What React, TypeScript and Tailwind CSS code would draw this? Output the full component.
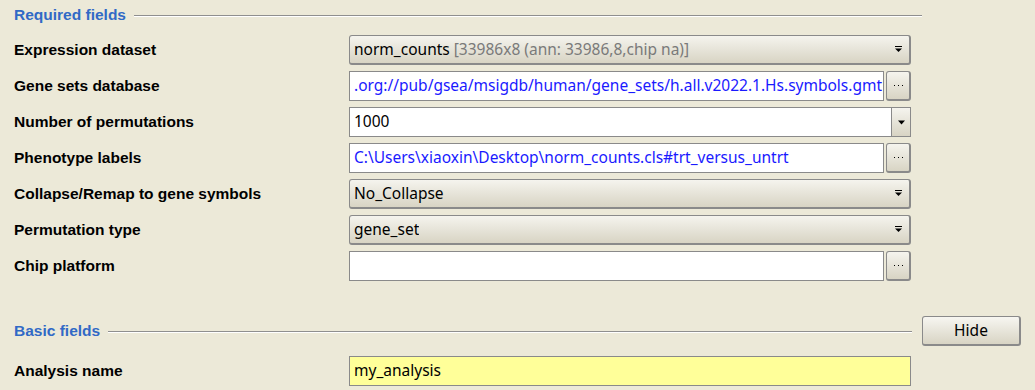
import React from "react";

const labelCls =
  "w-[335px] shrink-0 text-[15.5px] font-bold text-black font-['Liberation_Sans',sans-serif]";
const fieldFont = "font-['Noto_Sans',sans-serif] text-[15.5px]";

const DropArrow = () => (
  <svg width="9" height="7" viewBox="0 0 9 7" className="shrink-0">
    <rect x="1" y="0" width="7" height="1" fill="#000" />
    <path d="M1 2.5 H8 L4.5 6 Z" fill="#000" />
  </svg>
);

const Dropdown = ({ children }: { children: React.ReactNode }) => (
  <div
    className={`w-[562px] h-[30px] flex items-center justify-between pl-[4px] pr-[6px] rounded-[3px] border border-[#8a8a8a] border-b-[2px] border-r-[2px] bg-gradient-to-b from-[#f5f4ee] to-[#d8d4c4] text-black ${fieldFont}`}
  >
    <span className="whitespace-nowrap overflow-hidden">{children}</span>
    <DropArrow />
  </div>
);

const DotsButton = () => (
  <div className="w-[25px] h-[30px] ml-[2px] flex items-center justify-center rounded-[3px] border border-[#8a8a8a] border-b-[2px] border-r-[2px] bg-gradient-to-b from-[#f5f4ee] to-[#d8d4c4]">
    <svg width="9" height="3" viewBox="0 0 9 3">
      <rect x="0" y="1" width="1" height="1" fill="#000" />
      <rect x="4" y="1" width="1" height="1" fill="#000" />
      <rect x="8" y="1" width="1" height="1" fill="#000" />
    </svg>
  </div>
);

const TextField = ({
  children,
  withButton,
  blue,
}: {
  children?: React.ReactNode;
  withButton?: boolean;
  blue?: boolean;
}) => (
  <div className="flex w-[562px] h-[30px]">
    <div
      className={`flex-1 h-full flex items-center px-[4px] bg-white border border-[#8a8a8a] whitespace-nowrap overflow-hidden ${fieldFont} ${
        blue ? "text-[#1a1aff]" : "text-black"
      }`}
    >
      {children}
    </div>
    {withButton && <DotsButton />}
  </div>
);

const Combo = ({ value }: { value: string }) => (
  <div className="flex w-[562px] h-[30px] border border-[#8a8a8a] bg-white">
    <div className={`flex-1 flex items-center px-[4px] text-black ${fieldFont}`}>
      {value}
    </div>
    <div className="w-[19px] flex items-center justify-center border-l border-[#8a8a8a] bg-gradient-to-b from-[#f5f4ee] to-[#d8d4c4]">
      <svg width="9" height="5" viewBox="0 0 9 5">
        <path d="M1 0.5 H8 L4.5 4.5 Z" fill="#000" />
      </svg>
    </div>
  </div>
);

const Row = ({ label, children }: { label: string; children: React.ReactNode }) => (
  <div className="flex items-center h-[30px]">
    <div className={labelCls}>{label}</div>
    {children}
  </div>
);

const SectionTitle = ({ title }: { title: string }) => (
  <span className="text-[15.5px] font-bold text-[#3169c6] font-['Liberation_Sans',sans-serif] whitespace-nowrap">
    {title}
  </span>
);

const EtchedLine = () => (
  <div className="flex-1 border-t border-[#8f8f8f] border-b border-b-white h-0 mt-[1px]" />
);

export default function App() {
  return (
    <div className="w-[1035px] h-[390px] bg-[#ece9d8] pl-[14px] overflow-hidden">
      <div className="flex items-center gap-[8px] h-[30px] w-[908px]">
        <SectionTitle title="Required fields" />
        <EtchedLine />
      </div>
      <div className="flex flex-col gap-[6px] mt-[5px]">
        <Row label="Expression dataset">
          <Dropdown>
            norm_counts{" "}
            <span className="text-[#7a7a7a]">[33986x8 (ann: 33986,8,chip na)]</span>
          </Dropdown>
        </Row>
        <Row label="Gene sets database">
          <TextField withButton blue>
            .org://pub/gsea/msigdb/human/gene_sets/h.all.v2022.1.Hs.symbols.gmt
          </TextField>
        </Row>
        <Row label="Number of permutations">
          <Combo value="1000" />
        </Row>
        <Row label="Phenotype labels">
          <TextField withButton blue>
            C:\Users\xiaoxin\Desktop\norm_counts.cls#trt_versus_untrt
          </TextField>
        </Row>
        <Row label="Collapse/Remap to gene symbols">
          <Dropdown>No_Collapse</Dropdown>
        </Row>
        <Row label="Permutation type">
          <Dropdown>gene_set</Dropdown>
        </Row>
        <Row label="Chip platform">
          <TextField withButton />
        </Row>
      </div>

      <div className="flex items-center mt-[35px] h-[30px]">
        <div className="flex items-center gap-[8px] w-[898px]">
          <SectionTitle title="Basic fields" />
          <EtchedLine />
        </div>
        <button
          className={`ml-[10px] w-[99px] h-[30px] rounded-[3px] border border-[#8a8a8a] border-b-[2px] border-r-[2px] bg-gradient-to-b from-[#f7f6f1] to-[#d8d4c4] text-black ${fieldFont}`}
        >
          Hide
        </button>
      </div>
      <div className="mt-[10px]">
        <Row label="Analysis name">
          <div
            className={`w-[562px] h-[30px] flex items-center px-[4px] bg-[#ffff99] border border-[#8a8a8a] text-black ${fieldFont}`}
          >
            my_analysis
          </div>
        </Row>
      </div>
    </div>
  );
}
